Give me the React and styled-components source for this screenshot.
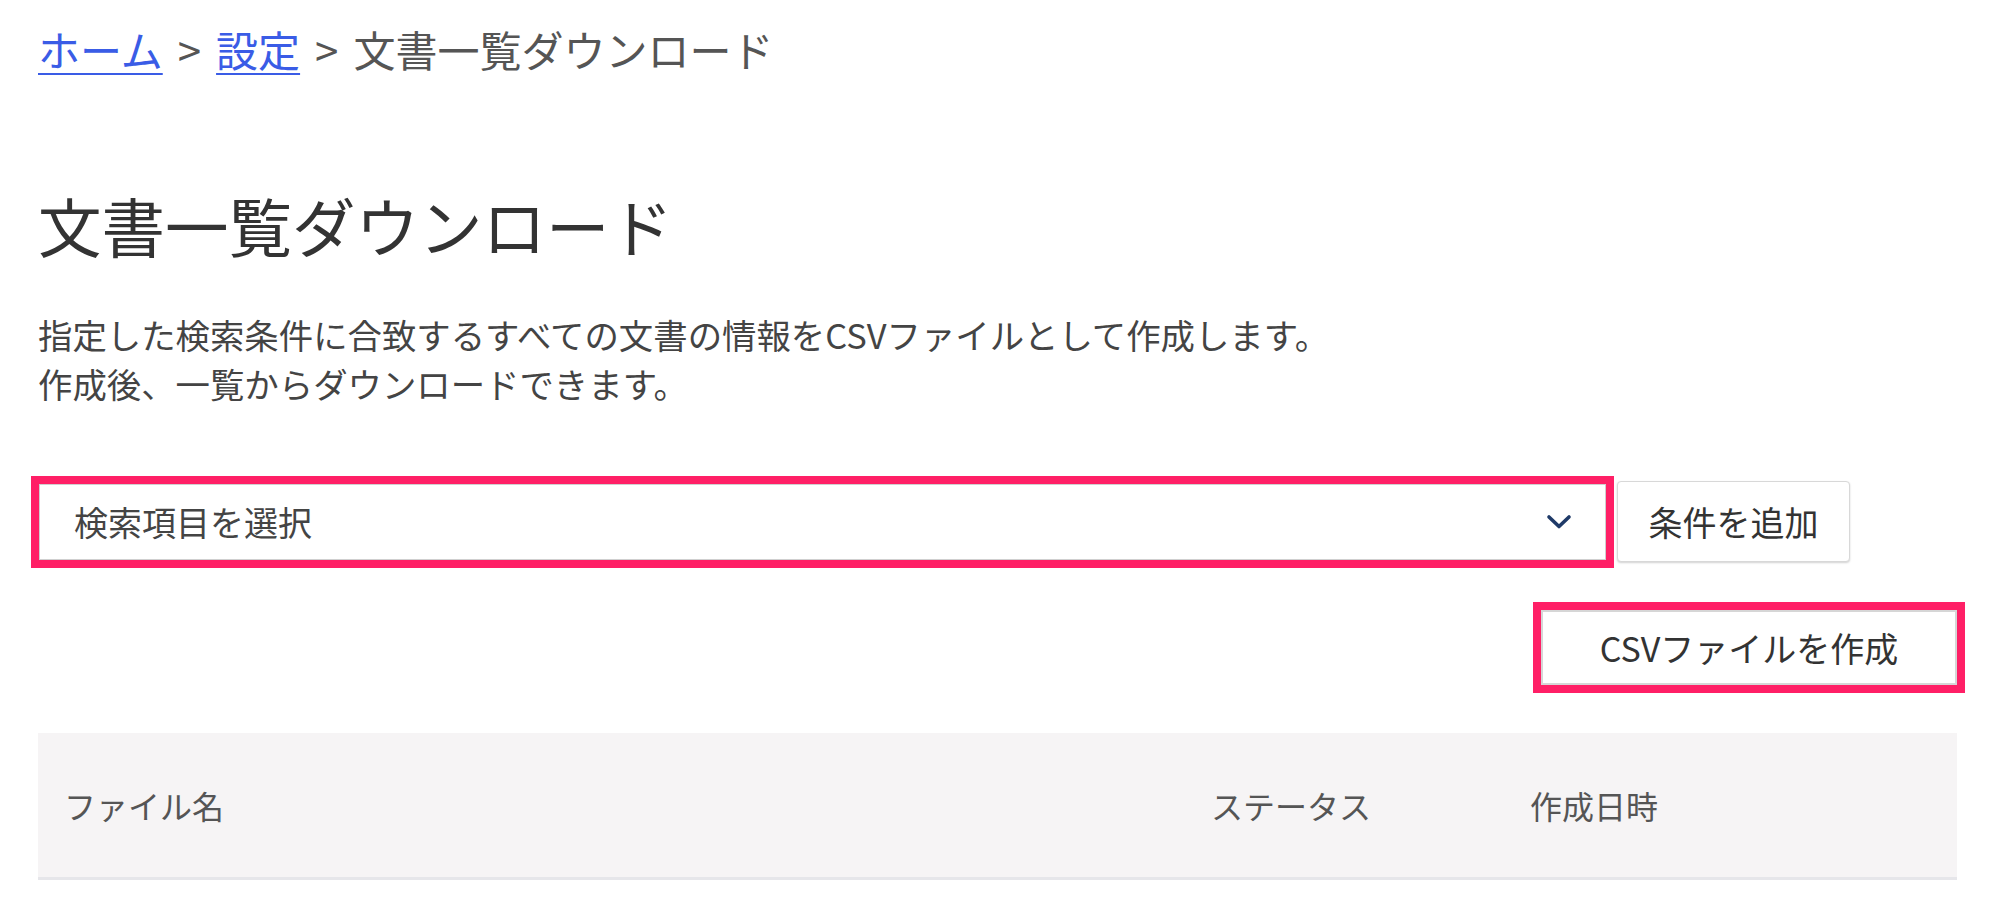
import React from 'react'
import styled, { createGlobalStyle } from 'styled-components'

const GlobalStyle = createGlobalStyle`
body {
  margin: 0;
  background: #fff;
  font-family: "Noto Sans CJK JP", "Noto Sans", sans-serif;
  color: #333;
}
`

const Page = styled.div`
padding: 17px 42px 0 38px;
display: flex;
flex-direction: column;
`

const Breadcrumb = styled.nav`
font-size: 42px;
line-height: 63px;
color: #555;
display: flex;
align-items: center;
`

const Crumb = styled.a`
color: #3a5ce6;
text-decoration: underline;
text-underline-offset: 6px;
text-decoration-thickness: 2px;
`

const Sep = styled.span`
margin: 0 15px;
color: #555;
`

const Title = styled.h1`
font-size: 63.5px;
font-weight: 400;
line-height: 88px;
margin: 100px 0 0;
color: #333;
`

const Description = styled.p`
font-size: 34.4px;
line-height: 49px;
margin: 42px 0 0;
color: #444;
`

const FilterRow = styled.div`
display: flex;
align-items: center;
gap: 11px;
margin-top: 73px;
padding-left: 1px;
`

const Highlight = styled.div`
outline: 8px solid #ff1f66;
`

const Select = styled.div`
width: 1567px;
height: 76px;
box-sizing: border-box;
border: 1px solid #cfcfcf;
background: #fff;
display: flex;
align-items: center;
justify-content: space-between;
padding: 0 33px 0 34px;
font-size: 34px;
color: #444;
`

const Button = styled.button`
font-family: "Noto Sans CJK JP", "Noto Sans", sans-serif;
font-size: 34px;
color: #333;
background: #fff;
border: ${p => (p.$plain ? '2px solid #d6d6d6' : '1px solid #d8d8d8')};
border-radius: ${p => (p.$plain ? '0' : '4px')};
box-shadow: ${p => (p.$plain ? 'none' : '0 1px 2px rgba(0,0,0,0.18)')};
height: ${p => p.$height}px;
width: ${p => p.$width}px;
padding: 0;
display: flex;
align-items: center;
justify-content: center;
box-sizing: border-box;
`

const ActionRow = styled.div`
display: flex;
justify-content: flex-end;
margin-top: 48px;
`

const Table = styled.div`
margin-top: 48px;
`

const HeadRow = styled.div`
display: grid;
grid-template-columns: 1147px 319px 1fr;
align-items: center;
height: 147px;
box-sizing: border-box;
background: #f6f4f5;
border-bottom: 3px solid #e6e6ea;
`

const HeadCell = styled.div`
padding-left: 26px;
font-size: 32px;
color: #555;
`

const Chevron = () => (
  <svg width="26" height="16" viewBox="0 0 26 16">
    <path d="M3 3 L13 12.5 L23 3" fill="none" stroke="#1f3a68" strokeWidth="3.6" strokeLinecap="round" strokeLinejoin="round" />
  </svg>
)

const App = () => (
  <>
    <GlobalStyle />
    <Page>
      <Breadcrumb>
        <Crumb>ホーム</Crumb>
        <Sep>&gt;</Sep>
        <Crumb>設定</Crumb>
        <Sep>&gt;</Sep>
        <span>文書一覧ダウンロード</span>
      </Breadcrumb>

      <Title>文書一覧ダウンロード</Title>

      <Description>
        指定した検索条件に合致するすべての文書の情報をCSVファイルとして作成します。
        <br />
        作成後、一覧からダウンロードできます。
      </Description>

      <FilterRow>
        <Highlight>
          <Select>
            <span>検索項目を選択</span>
            <Chevron />
          </Select>
        </Highlight>
        <Button $width={233} $height={81}>条件を追加</Button>
      </FilterRow>

      <ActionRow>
        <Highlight>
          <Button $plain $width={416} $height={75}>CSVファイルを作成</Button>
        </Highlight>
      </ActionRow>

      <Table>
        <HeadRow>
          <HeadCell>ファイル名</HeadCell>
          <HeadCell>ステータス</HeadCell>
          <HeadCell>作成日時</HeadCell>
        </HeadRow>
      </Table>
    </Page>
  </>
)

export default App
